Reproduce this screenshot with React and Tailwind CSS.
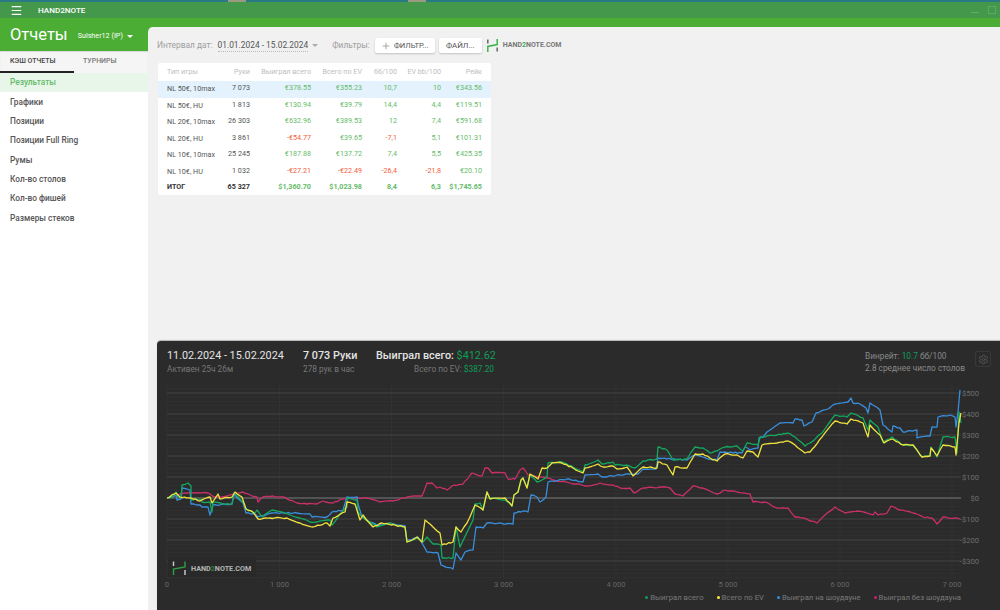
import React from "react";
import { Menu, Plus, Settings } from "lucide-react";

const font = { fontFamily: "Roboto, sans-serif" };

const menu = ["Результаты", "Графики", "Позиции", "Позиции Full Ring", "Румы", "Кол-во столов", "Кол-во фишей", "Размеры стеков"];

const head = ["Тип игры", "Руки", "Выиграл всего", "Всего по EV", "бб/100", "EV bb/100", "Рейк"];

const rows = [
  ["NL 50€, 10max", "7 073", "€378.55", "€355.23", "10,7", "10", "€343.56"],
  ["NL 50€, HU", "1 813", "€130.94", "€39.79", "14,4", "4,4", "€119.51"],
  ["NL 20€, 10max", "26 303", "€632.96", "€389.53", "12", "7,4", "€591.68"],
  ["NL 20€, HU", "3 861", "-€54.77", "€39.65", "-7,1", "5,1", "€101.31"],
  ["NL 10€, 10max", "25 245", "€187.88", "€137.72", "7,4", "5,5", "€425.35"],
  ["NL 10€, HU", "1 032", "-€27.21", "-€22.49", "-26,4", "-21,8", "€20.10"],
];

const total = ["ИТОГ", "65 327", "$1,360.70", "$1,023.98", "8,4", "6,3", "$1,745.65"];

const pink = "167,498 173,497 177,495 180,494 187,493 195,493 200,493 208,493 215,497 222,497 235,493 243,492 250,495 257,497 258,502 263,497 273,496 283,497 297,503 307,504 317,504 323,501 333,503 342,499 353,498 367,498 380,502 393,501 407,497 422,496 427,483 432,483 437,488 440,487 447,490 452,486 463,484 472,473 482,476 485,468 488,468 492,473 505,473 508,479 515,479 520,470 523,468 528,475 543,477 553,480 570,483 587,486 600,483 613,485 620,488 630,488 634,493 643,488 660,487 670,488 675,494 683,496 693,486 702,488 710,491 718,494 725,490 737,492 750,494 753,502 765,502 777,508 788,508 795,517 803,518 817,523 825,515 835,507 845,513 858,511 873,515 875,512 878,515 887,513 891,506 900,510 913,513 923,517 932,518 937,524 943,517 960,519";

const green = "167,498 173,497 176,492 178,497 181,498 182,485 188,483 191,486 191,500 200,499 202,502 210,502 212,512 213,502 223,504 232,504 234,493 243,502 246,509 255,513 257,510 262,517 272,510 285,513 300,518 310,522 317,522 330,520 332,525 342,512 347,507 347,498 357,500 358,512 362,517 370,522 377,527 390,523 405,527 407,542 418,538 423,542 427,537 433,544 441,545 442,558 453,558 456,527 460,547 473,520 475,504 480,503 483,510 487,492 490,498 505,500 512,506 514,495 518,492 521,480 523,478 527,488 530,475 537,482 547,477 548,463 562,462 573,467 583,472 585,465 598,460 602,464 613,462 615,465 627,465 635,468 643,461 657,459 658,447 667,450 673,460 687,459 695,447 703,448 710,453 717,451 725,447 737,446 743,451 747,443 758,445 760,437 777,435 788,433 795,437 805,446 810,443 822,433 835,415 847,417 851,413 863,418 868,430 870,420 878,427 883,442 892,437 903,445 913,445 922,457 930,456 931,447 937,457 943,437 955,437 957,453 959,412 961,423";

const yellow = "167,498 176,493 180,497 191,498 200,501 210,497 212,503 218,494 220,499 232,497 235,492 242,497 246,509 253,512 258,519 270,518 287,518 300,523 313,527 327,523 330,526 333,518 345,512 347,502 355,504 360,520 363,515 373,527 382,523 405,527 407,542 417,537 422,542 425,520 433,527 440,533 442,545 453,542 456,527 461,532 467,523 475,505 483,510 487,492 490,499 505,498 512,506 514,495 518,492 521,480 523,478 527,488 530,474 538,479 542,468 547,468 552,463 562,463 573,468 583,473 585,468 598,464 603,467 613,466 617,469 627,467 633,476 643,467 657,468 658,462 667,465 673,475 675,467 687,468 695,454 703,454 710,458 717,461 725,454 737,455 743,458 747,451 753,452 758,457 762,445 777,443 788,441 795,445 805,453 810,452 822,437 835,421 847,424 851,419 863,423 868,437 870,425 880,435 884,443 892,439 903,445 913,445 922,457 930,456 931,448 937,456 943,445 955,447 956,455 959,423 961,413";

const blue = "167,498 176,495 177,500 181,499 182,488 190,490 191,504 200,505 202,507 208,507 210,515 213,505 232,504 234,495 243,503 246,513 255,514 258,517 272,513 297,513 310,514 312,517 327,517 332,512 343,510 347,497 357,497 358,504 362,517 370,522 377,525 390,523 405,526 407,541 418,537 422,543 427,552 438,553 441,565 453,569 456,553 461,560 465,552 473,550 476,527 483,528 487,523 513,524 514,513 523,511 528,512 531,495 537,497 540,502 546,497 548,482 567,479 583,482 585,475 598,474 602,477 630,474 638,474 643,469 656,469 658,458 687,460 695,455 708,459 717,460 720,452 742,453 745,447 750,450 758,448 759,438 763,437 767,432 780,423 793,423 795,419 802,420 804,426 812,422 816,413 828,409 835,404 848,402 851,398 853,403 860,404 866,408 868,413 870,403 880,410 883,425 892,432 893,426 900,428 903,432 917,430 917,438 930,436 932,427 937,427 938,417 950,415 955,417 956,427 958,412 960,390";

// the real series are jagged, so add small steps between the traced points
function jag(points, seed) {
  const pts = points.split(" ").map((p) => p.split(",").map(Number));
  const out = [];
  pts.forEach(([x, y], i) => {
    out.push(`${x},${y}`);
    const next = pts[i + 1];
    if (!next) return;
    const steps = Math.floor((next[0] - x) / 2.2);
    for (let s = 1; s < steps; s++) {
      const t = s / steps;
      const nx = x + (next[0] - x) * t;
      const ny = y + (next[1] - y) * t + Math.sin(nx * 7.3 + seed) * 0.55;
      out.push(`${nx.toFixed(1)},${ny.toFixed(1)}`);
    }
  });
  return out.join(" ");
}

const minorLines = Array.from({ length: 46 }, (_, i) => 388.8 + i * 4.2);
const majorLines = [393, 414, 435, 456, 477, 519, 540, 561];
const xTicks = [[167, "0"], [279.5, "1 000"], [391.5, "2 000"], [503.5, "3 000"], [616, "4 000"], [728, "5 000"], [840, "6 000"], [952, "7 000"]];
const yTicks = [[393, "$500"], [414, "$400"], [435, "$300"], [456, "$200"], [477, "$100"], [498, "$0"], [519, "-$100"], [540, "-$200"], [561, "-$300"]];

const legend = [
  ["bg-[#0f9d58]", "Выиграл всего"],
  ["bg-[#ffeb3b]", "Всего по EV"],
  ["bg-[#2f8fe0]", "Выиграл на шоудауне"],
  ["bg-[#d81b60]", "Выиграл без шоудауна"],
];

const cols = "grid-cols-[55px_28px_61px_51px_35px_44px_41px]";

function cellColor(value, i) {
  if (i < 2) return "text-[#555]";
  return value.startsWith("-") ? "text-[#f4603c]" : "text-[#66bb6a]";
}

function Logo({ stub, className }) {
  return (
    <svg viewBox="0 0 11 13" className={className} fill="none" strokeWidth="1.5">
      <path d="M0.8 0.5V4.5M10.2 8.5V12.5" stroke={stub} />
      <path d="M0.8 13V7.4L10.2 5.6V0" stroke="#3fb24f" />
    </svg>
  );
}

function Chart() {
  return (
    <svg viewBox="157 380 843 208" className="block h-[208px] w-[843px]" style={font}>
      {minorLines.map((y) => (
        <line key={y} x1="167" x2="961" y1={y} y2={y} stroke="#333333" strokeWidth="0.7" />
      ))}
      {xTicks.map(([x]) => (
        <line key={x} x1={x} x2={x} y1="385" y2="577" stroke="#343434" strokeWidth="0.8" />
      ))}
      {majorLines.map((y) => (
        <line key={y} x1="167" x2="961" y1={y} y2={y} stroke="#404040" strokeWidth="1" />
      ))}
      <line x1="167" x2="961" y1="498" y2="498" stroke="#606060" strokeWidth="1.4" />
      <rect x="168" y="557" width="88" height="20" fill="#292929" />
      <g fill="none" strokeWidth="1.3" strokeLinejoin="round">
        <polyline points={jag(pink, 1)} stroke="#c92f68" />
        <polyline points={jag(blue, 2)} stroke="#3a8fdc" />
        <polyline points={jag(green, 3)} stroke="#14a85f" />
        <polyline points={jag(yellow, 4)} stroke="#efe23f" />
      </g>
      <path d="M173.5 561.5V566M185 570V575" stroke="#cfcfcf" strokeWidth="1.4" fill="none" />
      <path d="M173.5 575V569L185 567V561.5" stroke="#2e9e45" strokeWidth="1.4" fill="none" />
      <text x="191" y="571" fontSize="7.2" fontWeight="700" fill="#b5b5b5">
        HAND<tspan fill="#2e7d3a">2</tspan>NOTE.COM
      </text>
      {yTicks.map(([y, label]) => (
        <text key={label} x="979" y={y + 3} fontSize="7.6" fill="#6f6f6f" textAnchor="end">
          {label}
        </text>
      ))}
      {xTicks.map(([x, label]) => (
        <text key={label} x={x} y="587" fontSize="7.6" fill="#666666" textAnchor="middle">
          {label}
        </text>
      ))}
    </svg>
  );
}

export default function App() {
  return (
    <div className="flex h-screen flex-col overflow-hidden bg-[#4cad34] text-[#333]" style={font}>
      <div className="flex h-[2px] bg-[#2a7a86]">
        <span className="ml-[228px] w-[18px] bg-[#9a9a80]" />
        <span className="ml-[162px] w-[18px] bg-[#9a9a80]" />
      </div>
      <header className="flex h-[16px] items-center justify-between bg-[#43984c] pl-[10px] pr-[4px] text-white">
        <div className="flex items-center">
          <Menu size={13} strokeWidth={2.2} />
          <span className="ml-[15px] text-[8.1px] font-medium">HAND2NOTE</span>
        </div>
        <div className="flex items-center gap-[9px]">
          <span className="mt-[4px] h-px w-[8px] bg-[#62ab69]" />
          <span className="h-[8px] w-[8px] border border-[#5aa862]" />
        </div>
      </header>
      <div className="flex min-h-0 flex-1">
        <aside className="flex w-[148px] shrink-0 flex-col bg-white">
          <div className="flex h-[33px] items-center bg-[#4cad34] pl-[10px] pt-[1px] text-white">
            <span className="text-[16.5px] leading-none">Отчеты</span>
            <span className="ml-[10px] mt-[2px] text-[7.2px]">Sulsher12 (IP)</span>
            <span className="ml-[4px] mt-[2px] h-0 w-0 border-x-[3px] border-t-[3px] border-x-transparent border-t-white" />
          </div>
          <div className="flex h-[22px] bg-[#f5f5f5] text-[7px] font-medium shadow-[inset_0_1px_1px_rgba(0,0,0,0.12)]">
            <div className="flex w-[74px] items-center border-b-2 border-[#222] pl-[10px] text-[#444]">КЭШ ОТЧЕТЫ</div>
            <div className="flex w-[74px] items-center pb-[2px] pl-[9px] text-[#777]">ТУРНИРЫ</div>
          </div>
          <nav className="flex flex-col text-[8.3px] font-medium">
            {menu.map((item, i) => (
              <div
                key={item}
                className={`flex h-[19.3px] items-center pl-[10px] ${i === 0 ? "bg-[#e8f5e9] text-[#66bb6a]" : "text-[#555]"}`}
              >
                {item}
              </div>
            ))}
          </nav>
        </aside>
        <main className="mt-[9px] flex min-w-0 flex-1 flex-col rounded-tl-[5px] bg-[#f1f1f1]">
          <div className="flex h-[36px] items-center pl-[9px] pt-[1px] text-[8.4px]">
            <span className="text-[#9e9e9e]">Интервал дат:</span>
            <span className="ml-[5px] border-b border-dotted border-[#bbb] text-[8.4px] text-[#555]">01.01.2024 - 15.02.2024</span>
            <span className="ml-[4px] h-0 w-0 border-x-[3px] border-t-[3px] border-x-transparent border-t-[#aaa]" />
            <span className="ml-[14px] text-[#9e9e9e]">Фильтры:</span>
            <button className="ml-[5px] flex h-[15px] w-[60px] items-center justify-center gap-[3px] rounded-[2px] bg-white text-[7.6px] text-[#555] shadow-[0_1px_2px_rgba(0,0,0,0.2)]">
              <Plus size={10} className="text-[#999]" />
              ФИЛЬТР...
            </button>
            <button className="ml-[4px] h-[15px] w-[43px] rounded-[2px] bg-white text-[7.9px] text-[#555] shadow-[0_1px_2px_rgba(0,0,0,0.2)]">ФАЙЛ...</button>
            <Logo stub="#666" className="ml-[5px] h-[13px] w-[11px]" />
            <span className="ml-[5px] text-[7px] font-bold text-[#777]">
              HAND<span className="text-[#3fb24f]">2</span>NOTE.COM
            </span>
          </div>
          <div className="ml-[10px] w-[333px] rounded-[2px] bg-white">
            <div className={`grid h-[18px] ${cols} items-center px-[9px] text-right text-[7.2px] text-[#bdbdbd]`}>
              {head.map((h, i) => (
                <div key={h} className={i === 0 ? "text-left" : "whitespace-nowrap"}>
                  {h}
                </div>
              ))}
            </div>
            {rows.map((row, r) => (
              <div
                key={r}
                className={`grid h-[16.5px] ${cols} items-center px-[9px] text-right text-[7.2px] ${r === 0 ? "bg-[#e3f2fd]" : ""}`}
              >
                {row.map((v, i) => (
                  <div key={i} className={`${i === 0 ? "whitespace-nowrap pt-[1px] text-left" : "pb-[1px]"} ${cellColor(v, i)}`}>
                    {v}
                  </div>
                ))}
              </div>
            ))}
            <div className={`grid h-[15px] ${cols} items-center px-[9px] text-right text-[7.2px] font-bold`}>
              {total.map((v, i) => (
                <div key={i} className={i < 2 ? (i === 0 ? "text-left text-[#333]" : "text-[#333]") : "whitespace-nowrap text-[#66bb6a]"}>
                  {v}
                </div>
              ))}
            </div>
          </div>
          <section className="ml-[9px] mt-auto flex h-[269px] flex-col rounded-tl-[4px] bg-[#2b2b2b] text-[#777] shadow-[0_-1px_1px_rgba(0,0,0,0.25)]">
            <div className="flex h-[39px] pl-[10px] pt-[8px]">
              <div className="w-[136px]">
                <div className="text-[10.8px] leading-[14px] text-[#e4e4e4]">11.02.2024 - 15.02.2024</div>
                <div className="text-[8.3px] leading-[12px]">Активен 25ч 26м</div>
              </div>
              <div className="w-[73px]">
                <div className="text-[10.8px] font-medium leading-[14px] text-[#e4e4e4]">7 073 Руки</div>
                <div className="text-[8.3px] leading-[12px]">278 рук в час</div>
              </div>
              <div className="w-[118px] text-right">
                <div className="whitespace-nowrap text-[10.8px] leading-[14px]">
                  <span className="font-medium text-[#e4e4e4]">Выиграл всего: </span>
                  <span className="text-[#0f9d58]">$412.62</span>
                </div>
                <div className="text-[8.3px] leading-[12px]">
                  Всего по EV: <span className="text-[#0f9d58]">$387.20</span>
                </div>
              </div>
              <div className="ml-auto mr-[10px] pt-[1px] text-[8.3px] leading-[12px] text-[#8a8a8a]">
                <div>
                  Винрейт: <span className="text-[#0f9d58]">10.7</span> бб/100
                </div>
                <div>2.8 среднее число столов</div>
              </div>
              <div className="mr-[9px] mt-[2px] flex h-[16px] w-[16px] items-center justify-center rounded-[2px] border border-[#383838] text-[#555]">
                <Settings size={11} />
              </div>
            </div>
            <Chart />
            <div className="flex h-[22px] items-start justify-end gap-[13px] pr-[39px] pt-[4px] text-[7.7px] text-[#7a7a7a]">
              {legend.map(([color, label]) => (
                <div key={label} className="flex items-center gap-[2px] whitespace-nowrap">
                  <span className={`h-[3px] w-[3px] rounded-full ${color}`} />
                  {label}
                </div>
              ))}
            </div>
          </section>
        </main>
      </div>
    </div>
  );
}
